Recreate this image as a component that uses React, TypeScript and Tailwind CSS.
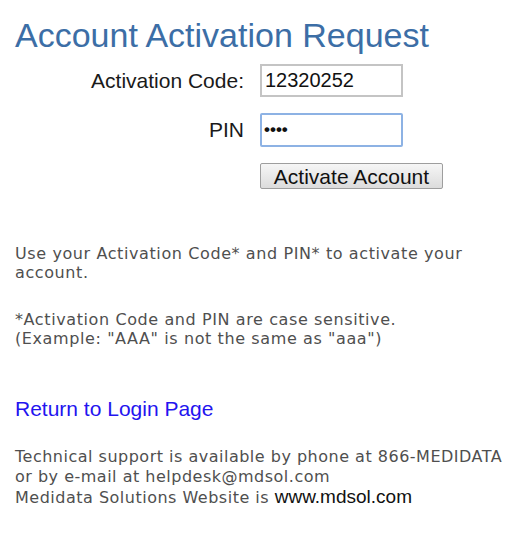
import React from 'react';

const verdana = { fontFamily: '"DejaVu Sans", Verdana, sans-serif' };

export default function App() {
  return (
    <div className="min-h-[538px] w-[532px] bg-white px-[15px] font-['Liberation_Sans',Arial,sans-serif]">
      <h1 className="pt-[18px] text-[34px] leading-none font-normal text-[#3c6ea6]">Account Activation Request</h1>

      <div className="mt-[12px] grid grid-cols-[229px_183px] items-center gap-x-[16px] gap-y-[16px] text-[21px] text-[#1a1a1a]">
        <label className="text-right">Activation Code:</label>
        <input
          type="text"
          defaultValue="12320252"
          className="h-[33px] w-[143px] border-2 border-[#c4c4c4] bg-white px-[3px] text-[20px] text-[#111] outline-none"
        />
        <label className="text-right">PIN</label>
        <input
          type="password"
          defaultValue="1234"
          className="h-[34px] w-[143px] rounded-[2px] border-2 border-[#8db2e4] bg-white px-[2px] text-[17px] font-bold text-[#111] outline-none"
        />
        <div />
        <button className="h-[26px] w-[183px] rounded-[2px] border border-[#9e9e9e] bg-gradient-to-b from-[#f6f6f6] to-[#dcdcdc] text-[21px] leading-none text-[#111]">
          Activate Account
        </button>
      </div>

      <div className="mt-[55px] text-[16px] leading-[19px] tracking-[0.6px] text-[#4f4f4f]" style={verdana}>
        <p>
          Use your Activation Code* and PIN* to activate your
          <br />
          account.
        </p>
        <p className="mt-[28px]">
          *Activation Code and PIN are case sensitive.
          <br />
          (Example: "AAA" is not the same as "aaa")
        </p>
      </div>

      <a href="#" className="mt-[50px] block text-[21px] leading-none text-[#2414ef]">
        Return to Login Page
      </a>

      <div className="mt-[28px] text-[16px] leading-[20px] tracking-[0.5px] text-[#4f4f4f]" style={verdana}>
        Technical support is available by phone at 866-MEDIDATA
        <br />
        or by e-mail at helpdesk@mdsol.com
        <br />
        Medidata Solutions Website is{' '}
        <span className="font-['Liberation_Sans',Arial,sans-serif] text-[19px] tracking-normal text-[#111]">www.mdsol.com</span>
      </div>
    </div>
  );
}
